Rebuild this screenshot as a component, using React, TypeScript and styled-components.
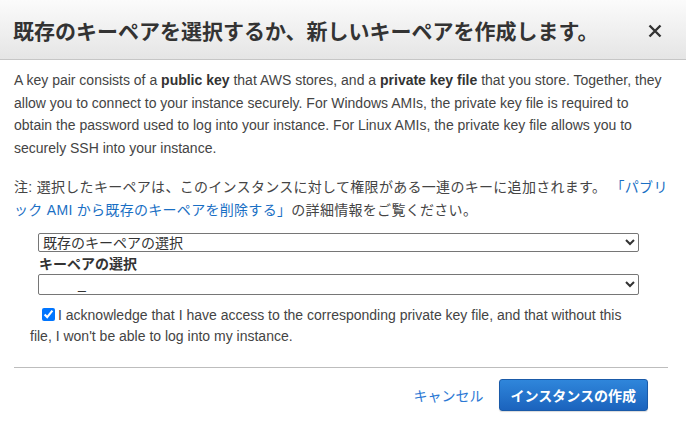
import React from "react";
import styled, { createGlobalStyle } from "styled-components";

const GlobalStyle = createGlobalStyle`
  body {
    margin: 0;
    background: #ffffff;
    font-family: "Liberation Sans", "Noto Sans CJK JP", sans-serif;
    color: #444444;
  }
`;

const Dialog = styled.div`
  width: 686px;
  height: 430px;
  background: #ffffff;
  overflow: hidden;
`;

const Header = styled.div`
  height: 59px;
  display: flex;
  align-items: center;
  justify-content: space-between;
  padding: 0 23px 0 13px;
  background: linear-gradient(to bottom, #fbfbfb, #e5e5e5);
  border-bottom: 1px solid #c6c6c6;
  box-sizing: content-box;
`;

const Title = styled.h2`
  margin: 0;
  font-family: "Noto Sans CJK JP", sans-serif;
  font-size: 21px;
  font-weight: 700;
  color: #333333;
  white-space: nowrap;
  text-spacing-trim: space-all;
`;

const CloseButton = styled.button`
  border: 0;
  background: transparent;
  padding: 0;
  width: 16px;
  height: 16px;
  display: flex;
  align-items: center;
  justify-content: center;
  cursor: pointer;
  margin-top: 2px;
`;

const Body = styled.div`
  padding: 9px 18px 0 14px;
`;

const Intro = styled.p`
  margin: 0;
  font-size: 14px;
  line-height: 22.7px;
  color: #444444;

  b {
    color: #333333;
  }
`;

const Note = styled.p`
  margin: 16px 0 0;
  font-size: 14px;
  line-height: 23px;
  letter-spacing: 0.3px;
  color: #444444;
  line-break: loose;
  text-spacing-trim: space-all;
`;

const Link = styled.a`
  color: #1a6fc4;
  text-decoration: none;
`;

const Form = styled.div`
  margin-top: 11px;
  padding-left: 24px;
  display: flex;
  flex-direction: column;
`;

const Select = styled.select<{ $h: number }>`
  box-sizing: border-box;
  width: 601px;
  height: ${(p) => p.$h}px;
  font-family: "Liberation Sans", "Noto Sans CJK JP", sans-serif;
  font-size: 14px;
  line-height: 16px;
  color: #333333;
  border: 1px solid #767676;
  border-radius: 2px;
  background: #ffffff;
  padding: 0;
  margin: 0;
`;

const Label = styled.label`
  font-family: "Noto Sans CJK JP", sans-serif;
  font-size: 14px;
  font-weight: 700;
  line-height: 22px;
  color: #333333;
  padding-left: 1px;
`;

const Ack = styled.p`
  margin: 10px 30px 0 0;
  padding-left: 16px;
  font-size: 14px;
  line-height: 21px;
  color: #444444;

  input {
    margin: 0 3px 0 12px;
    width: 13px;
    height: 13px;
    vertical-align: -1px;
  }
`;

const Divider = styled.hr`
  margin: 20px 0 0;
  border: 0;
  border-top: 1px solid #bdbdbd;
`;

const Footer = styled.div`
  display: flex;
  justify-content: flex-end;
  align-items: center;
  gap: 15px;
  padding: 11px 20px 0 0;
`;

const CancelLink = styled.a`
  font-family: "Noto Sans CJK JP", sans-serif;
  font-size: 14px;
  color: #2a78d4;
  text-decoration: none;
  cursor: pointer;
`;

const PrimaryButton = styled.button`
  height: 32px;
  padding: 0 11px;
  font-family: "Noto Sans CJK JP", sans-serif;
  font-size: 14px;
  font-weight: 700;
  color: #ffffff;
  background: linear-gradient(to bottom, #2f86db, #1b63bd);
  border: 1px solid #1a5aa8;
  border-radius: 3px;
  box-shadow: 0 1px 1px rgba(0, 0, 0, 0.15);
  cursor: pointer;
`;

const App: React.FC = () => {
  const [checked, setChecked] = React.useState(true);

  return (
    <>
      <GlobalStyle />
      <Dialog>
        <Header>
          <Title>既存のキーペアを選択するか、新しいキーペアを作成します。</Title>
          <CloseButton aria-label="閉じる">
            <svg width="14" height="14" viewBox="0 0 14 14">
              <path
                d="M1.5 1.5 L12.5 12.5 M12.5 1.5 L1.5 12.5"
                stroke="#333"
                strokeWidth="2.4"
              />
            </svg>
          </CloseButton>
        </Header>
        <Body>
          <Intro>
            A key pair consists of a <b>public key</b> that AWS stores, and a{" "}
            <b>private key file</b> that you store. Together, they allow you to
            connect to your instance securely. For Windows AMIs, the private
            key file is required to obtain the password used to log into your
            instance. For Linux AMIs, the private key file allows you to
            securely SSH into your instance.
          </Intro>
          <Note>
            注: 選択したキーペアは、このインスタンスに対して権限がある一連のキーに追加されます。{" "}
            <Link href="#">「パブリック AMI から既存のキーペアを削除する」</Link>
            の詳細情報をご覧ください。
          </Note>
          <Form>
            <Select $h={19} defaultValue="existing">
              <option value="existing">既存のキーペアの選択</option>
              <option value="new">新しいキーペアの作成</option>
            </Select>
            <Label>キーペアの選択</Label>
            <Select $h={21} defaultValue="k">
              <option value="k">
                {"\u00a0\u00a0\u00a0\u00a0\u00a0\u00a0\u00a0\u00a0\u00a0_"}
              </option>
            </Select>
          </Form>
          <Ack>
            <input
              type="checkbox"
              checked={checked}
              onChange={() => setChecked(!checked)}
            />
            I acknowledge that I have access to the corresponding private key
            file, and that without this file, I won't be able to log into my
            instance.
          </Ack>
          <Divider />
          <Footer>
            <CancelLink>キャンセル</CancelLink>
            <PrimaryButton>インスタンスの作成</PrimaryButton>
          </Footer>
        </Body>
      </Dialog>
    </>
  );
};

export default App;
